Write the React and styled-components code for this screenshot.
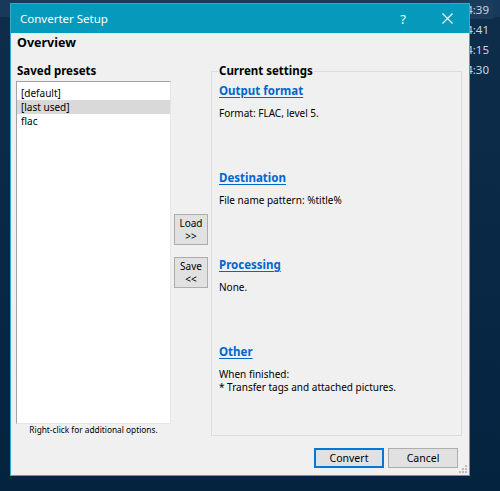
import React from "react";
import styled, { createGlobalStyle } from "styled-components";

const Global = createGlobalStyle`
  html, body { margin: 0; padding: 0; }
  body { font-family: "Noto Sans", sans-serif; }
  * { box-sizing: border-box; }
`;

const Desktop = styled.div`
  position: relative;
  width: 500px;
  height: 491px;
  overflow: hidden;
  background: linear-gradient(#173a5b 0 17px, #0d2d4a 17px, #04233f 100%);
  padding: 3px 0 0 10px;
`;

const Clock = styled.div`
  position: absolute;
  top: -1px;
  right: 7px;
  display: flex;
  flex-direction: column;
  z-index: 0;
`;

const ClockItem = styled.div`
  height: 20px;
  padding: 0 4px 0 10px;
  display: flex;
  align-items: center;
  justify-content: flex-end;
  font-size: 11.5px;
  color: #c8d5e2;
  background: ${(p) => (p.$active ? "#1a3d5e" : "transparent")};
`;

const Dialog = styled.div`
  position: relative;
  z-index: 1;
  width: 460px;
  height: 473px;
  border: 1px solid #3aa7cf;
  background: #f0f0f0;
  display: flex;
  flex-direction: column;
`;

const TitleBar = styled.div`
  height: 29px;
  flex: none;
  background: #0599bc;
  color: #ffffff;
  display: flex;
  align-items: center;
  padding-left: 9px;
  font-size: 11.5px;
`;

const TitleText = styled.div`
  flex: 1;
  margin-top: -1px;
`;

const TitleButton = styled.div`
  width: 44px;
  height: 29px;
  display: flex;
  align-items: center;
  justify-content: center;
  font-size: 13px;
  color: #fff;
`;

const Client = styled.div`
  flex: 1;
  position: relative;
  display: flex;
  flex-direction: column;
  padding: 1px 7px 0 5px;
`;

const Heading = styled.div`
  font-size: 12.5px;
  font-weight: 700;
  line-height: 18px;
  height: 18px;
  padding-left: 1px;
  color: #000;
`;

const Main = styled.div`
  margin-top: 11px;
  display: grid;
  grid-template-columns: 155px 34px 251px;
  column-gap: 3px;
  align-items: start;
`;

const LeftColumn = styled.div`
  display: flex;
  flex-direction: column;
`;

const Label = styled.div`
  font-size: 11.5px;
  font-weight: 700;
  line-height: 16px;
  height: 16px;
  padding-left: 1px;
  color: #000;
`;

const ListBox = styled.div`
  margin-top: 2px;
  height: 343px;
  background: #ffffff;
  border: 1px solid;
  border-color: #a3a3a3 #e6e6e6 #e6e6e6 #a3a3a3;
  padding-top: 4px;
  display: flex;
  flex-direction: column;
`;

const ListItem = styled.div`
  height: 14px;
  line-height: 14px;
  font-size: 10px;
  padding-left: 4px;
  color: #000;
  background: ${(p) => (p.$selected ? "#d9d9d9" : "transparent")};
`;

const Hint = styled.div`
  font-size: 8.3px;
  line-height: 12px;
  height: 12px;
  text-align: center;
  color: #000;
`;

const MiddleColumn = styled.div`
  display: flex;
  flex-direction: column;
  padding-top: 151px;
  gap: 12px;
`;

const SmallButton = styled.button`
  width: 34px;
  height: 31px;
  margin: 0;
  padding: 1px 0 0;
  background: #e1e1e1;
  border: 1px solid #adadad;
  font-family: "Noto Sans", sans-serif;
  font-size: 10px;
  color: #000;
  display: flex;
  flex-direction: column;
  align-items: center;
  justify-content: center;
`;

const ButtonLine = styled.span`
  display: block;
  height: 13px;
  line-height: 13px;
`;

const Group = styled.div`
  position: relative;
  margin-top: 8px;
  height: 365px;
  border: 1px solid #dcdcdc;
  padding: 11px 0 0 7px;
  display: flex;
  flex-direction: column;
`;

const Legend = styled.div`
  position: absolute;
  top: -9px;
  left: 6px;
  padding: 0 1px;
  background: #f0f0f0;
  font-size: 11.5px;
  font-weight: 700;
  line-height: 16px;
  color: #000;
`;

const Section = styled.div`
  height: 87px;
  flex: none;
  display: flex;
  flex-direction: column;
  align-items: flex-start;
`;

const Link = styled.a`
  font-size: 11.5px;
  font-weight: 700;
  line-height: 16px;
  color: #0066cc;
  text-decoration: underline;
  text-underline-offset: 2px;
  cursor: pointer;
`;

const Desc = styled.div`
  margin-top: 8px;
  font-size: 10px;
  line-height: 12.5px;
  color: #000;
`;

const Footer = styled.div`
  margin-top: 12px;
  display: flex;
  justify-content: flex-end;
  gap: 4px;
  padding-right: 4px;
`;

const DialogButton = styled.button`
  width: 70px;
  height: 20px;
  margin: 0;
  padding: 0;
  background: #e1e1e1;
  border: 1px solid ${(p) => (p.$default ? "#0078d7" : "#adadad")};
  box-shadow: ${(p) => (p.$default ? "inset 0 0 0 1px #0078d7" : "none")};
  font-family: "Noto Sans", sans-serif;
  font-size: 10.5px;
  color: #000;
`;

const Grip = styled.svg`
  position: absolute;
  right: 1px;
  bottom: 1px;
`;

export default function App() {
  return (
    <>
      <Global />
      <Desktop>
        <Clock>
          <ClockItem $active>14:39</ClockItem>
          <ClockItem>14:41</ClockItem>
          <ClockItem>14:15</ClockItem>
          <ClockItem>14:30</ClockItem>
        </Clock>
        <Dialog>
          <TitleBar>
            <TitleText>Converter Setup</TitleText>
            <TitleButton>?</TitleButton>
            <TitleButton>
              <svg width="11" height="11" viewBox="0 0 11 11">
                <path d="M0.5 0.5 L10.5 10.5 M10.5 0.5 L0.5 10.5" stroke="#fff" strokeWidth="1.1" />
              </svg>
            </TitleButton>
          </TitleBar>
          <Client>
            <Heading>Overview</Heading>
            <Main>
              <LeftColumn>
                <Label>Saved presets</Label>
                <ListBox>
                  <ListItem>[default]</ListItem>
                  <ListItem $selected>[last used]</ListItem>
                  <ListItem>flac</ListItem>
                </ListBox>
                <Hint>Right-click for additional options.</Hint>
              </LeftColumn>
              <MiddleColumn>
                <SmallButton>
                  <ButtonLine>Load</ButtonLine>
                  <ButtonLine>&gt;&gt;</ButtonLine>
                </SmallButton>
                <SmallButton>
                  <ButtonLine>Save</ButtonLine>
                  <ButtonLine>&lt;&lt;</ButtonLine>
                </SmallButton>
              </MiddleColumn>
              <Group>
                <Legend>Current settings</Legend>
                <Section>
                  <Link>Output format</Link>
                  <Desc>Format: FLAC, level 5.</Desc>
                </Section>
                <Section>
                  <Link>Destination</Link>
                  <Desc>File name pattern: %title%</Desc>
                </Section>
                <Section>
                  <Link>Processing</Link>
                  <Desc>None.</Desc>
                </Section>
                <Section>
                  <Link>Other</Link>
                  <Desc>
                    When finished:
                    <br />* Transfer tags and attached pictures.
                  </Desc>
                </Section>
              </Group>
            </Main>
            <Footer>
              <DialogButton $default>Convert</DialogButton>
              <DialogButton>Cancel</DialogButton>
            </Footer>
            <Grip width="10" height="10" viewBox="0 0 10 10">
              <g fill="#bdbdbd">
                <rect x="7" y="1" width="2" height="2" />
                <rect x="4" y="4" width="2" height="2" />
                <rect x="7" y="4" width="2" height="2" />
                <rect x="1" y="7" width="2" height="2" />
                <rect x="4" y="7" width="2" height="2" />
                <rect x="7" y="7" width="2" height="2" />
              </g>
            </Grip>
          </Client>
        </Dialog>
      </Desktop>
    </>
  );
}
